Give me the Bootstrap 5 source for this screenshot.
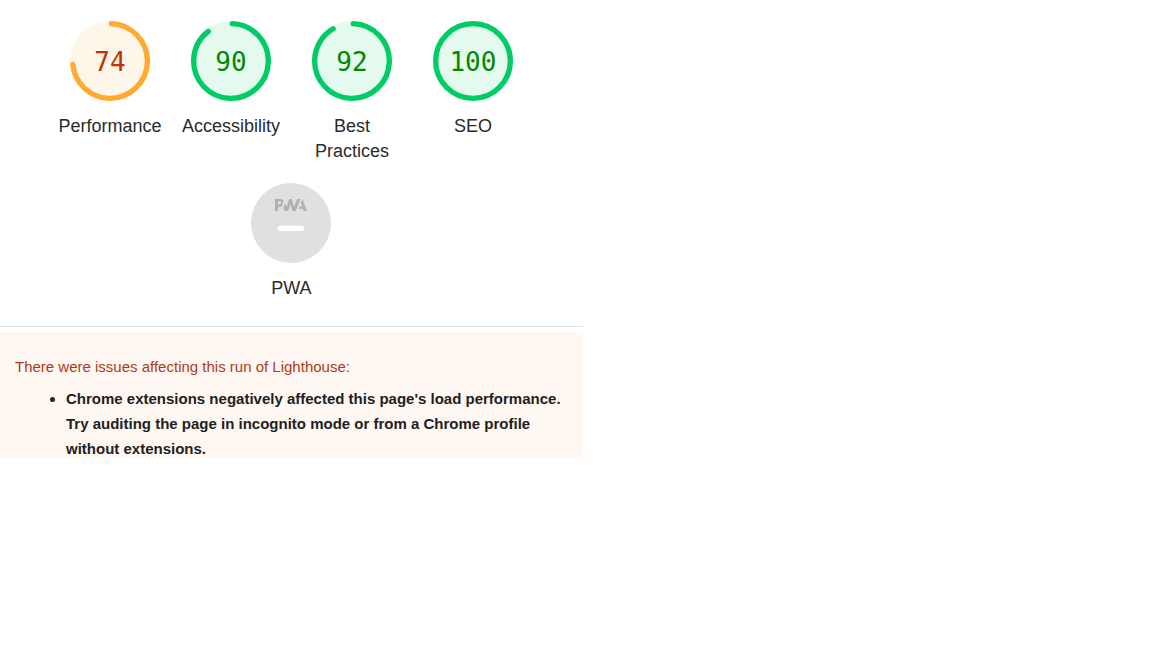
<!DOCTYPE html>
<html lang="en">
<head>
<meta charset="utf-8">
<meta name="viewport" content="width=device-width, initial-scale=1">
<title>Lighthouse report</title>
<link href="https://cdn.jsdelivr.net/npm/bootstrap@5.3.0/dist/css/bootstrap.min.css" rel="stylesheet">
<style>
  body { font-family: "Liberation Sans", Arial, sans-serif; color: #212121; background: #fff; }
  .report { width: 50.6%; min-width: 500px; }
  .scores { padding: 21px 32px 25px; row-gap: 19px; border-bottom: 1px solid #e0e0e0; }
  .gauge { width: 121px; padding: 0 10px; color: #2a2a2a; font-size: 18px; line-height: 25px; }
  .gauge:hover { color: #212121; }
  .gauge-dial { width: 80px; height: 80px; margin-bottom: 13px; }
  .gauge-dial svg { display: block; width: 100%; height: 100%; }
  .gauge-base { fill: currentColor; opacity: .1; }
  .gauge-arc { fill: none; stroke: currentColor; stroke-width: 8; stroke-linecap: round; }
  .gauge-score { padding-top: 2px; font: 26px "DejaVu Sans Mono", monospace; }
  .average { color: #fa3; }
  .average .gauge-score { color: #c33300; }
  .pass { color: #0c6; }
  .pass .gauge-score { color: #080; }
  .warnings { margin-top: 5px; padding: 22px 15px 0; max-height: 125px; background: #fff7f1; font-size: 15px; line-height: 25px; }
  .warnings-title { color: #b03a1c; margin-bottom: 7px; }
  .warnings ul { padding-left: 51px; }
</style>
</head>
<body>
<main class="report">
  <nav class="scores d-flex flex-wrap justify-content-center" aria-label="Category scores">
    <a href="#performance" class="gauge d-flex flex-column align-items-center text-center text-decoration-none">
      <div class="gauge-dial average position-relative">
        <svg viewBox="0 0 120 120" aria-hidden="true"><circle class="gauge-base" cx="60" cy="60" r="60"/><circle class="gauge-arc" cx="60" cy="60" r="56" transform="rotate(-88 60 60)" stroke-dasharray="256.4 352"/></svg>
        <span class="gauge-score position-absolute top-50 start-50 translate-middle">74</span>
      </div>
      <span>Performance</span>
    </a>
    <a href="#accessibility" class="gauge d-flex flex-column align-items-center text-center text-decoration-none">
      <div class="gauge-dial pass position-relative">
        <svg viewBox="0 0 120 120" aria-hidden="true"><circle class="gauge-base" cx="60" cy="60" r="60"/><circle class="gauge-arc" cx="60" cy="60" r="56" transform="rotate(-88 60 60)" stroke-dasharray="312.7 352"/></svg>
        <span class="gauge-score position-absolute top-50 start-50 translate-middle">90</span>
      </div>
      <span>Accessibility</span>
    </a>
    <a href="#best-practices" class="gauge d-flex flex-column align-items-center text-center text-decoration-none">
      <div class="gauge-dial pass position-relative">
        <svg viewBox="0 0 120 120" aria-hidden="true"><circle class="gauge-base" cx="60" cy="60" r="60"/><circle class="gauge-arc" cx="60" cy="60" r="56" transform="rotate(-88 60 60)" stroke-dasharray="319.7 352"/></svg>
        <span class="gauge-score position-absolute top-50 start-50 translate-middle">92</span>
      </div>
      <span>Best Practices</span>
    </a>
    <a href="#seo" class="gauge d-flex flex-column align-items-center text-center text-decoration-none">
      <div class="gauge-dial pass position-relative">
        <svg viewBox="0 0 120 120" aria-hidden="true"><circle class="gauge-base" cx="60" cy="60" r="60"/><circle class="gauge-arc" cx="60" cy="60" r="56"/></svg>
        <span class="gauge-score position-absolute top-50 start-50 translate-middle">100</span>
      </div>
      <span>SEO</span>
    </a>
    <a href="#pwa" class="gauge d-flex flex-column align-items-center text-center text-decoration-none">
      <div class="gauge-dial">
        <svg viewBox="0 0 60 60" aria-hidden="true">
          <circle cx="30" cy="30" r="30" fill="#e0e0e0"/>
          <g fill="#b0b0b0">
            <path d="M35.66 19.39l.7-1.75h2L37.4 15 38.6 12l3.4 9h-2.51l-.58-1.61z"/>
            <path d="M33.52 21l3.65-9h-2.42l-2.5 5.82L30.5 12h-1.86l-1.9 5.82-1.35-2.65-1.21 3.72L25.4 21h2.38l1.72-5.2 1.64 5.2z"/>
            <path d="M20.3 17.91h1.48c.45 0 .85-.05 1.2-.15l.39-1.18 1.07-3.3a2.64 2.64 0 0 0-.28-.37c-.55-.6-1.36-.91-2.42-.91H18v9h2.3V17.9zm1.96-3.84c.22.22.33.5.33.87 0 .36-.1.65-.29.87-.2.23-.59.35-1.15.35h-.86v-2.41h.87c.52 0 .89.1 1.1.32z"/>
          </g>
          <rect x="20" y="32" width="20" height="4" rx="2" fill="#fff"/>
        </svg>
      </div>
      <span>PWA</span>
    </a>
  </nav>
  <section class="warnings overflow-hidden">
    <p class="warnings-title">There were issues affecting this run of Lighthouse:</p>
    <ul class="mb-0 fw-bold">
      <li>Chrome extensions negatively affected this page's load performance. Try auditing the page in incognito mode or from a Chrome profile without extensions.</li>
    </ul>
  </section>
</main>
<script src="https://cdn.jsdelivr.net/npm/bootstrap@5.3.0/dist/js/bootstrap.bundle.min.js"></script>
</body>
</html>
